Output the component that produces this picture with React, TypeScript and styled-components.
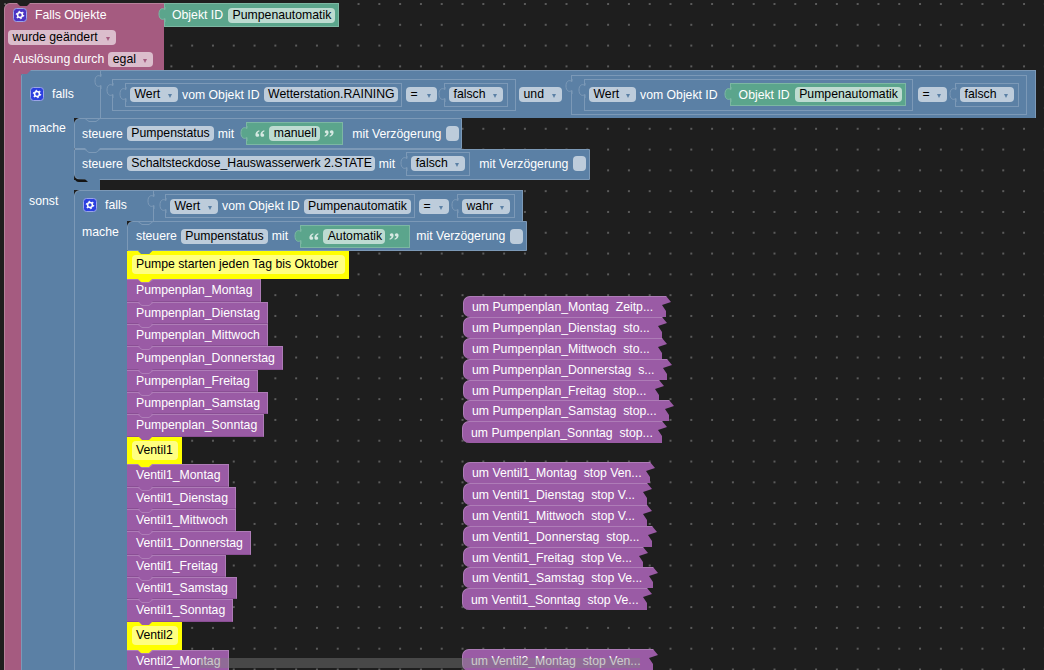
import React from "react";
import styled, { createGlobalStyle } from "styled-components";

const BLUE = "#5b80a5";
const BLUE_L = "#7c99b7";
const PINK = "#a55b80";
const PINK_L = "#b7829b";
const GREEN = "#5ba58c";
const GREEN_L = "#7cb7a3";
const PURPLE = "#9a5ba5";
const PURPLE_L = "#ae7cb7";
const CHEVRON = "polygon(0 0, 4px 3px, calc(100% - 4px) 3px, 100% 0, 100% 1px, calc(100% - 4px) 4px, 4px 4px, 0 1px)";
const TRAPEZOID = "polygon(0 0, 100% 0, calc(100% - 4px) 100%, 4px 100%)";

const Global = createGlobalStyle`
  html, body { margin: 0; padding: 0; background: #1e1e1e; overflow: hidden; }
  * { box-sizing: border-box; }
`;

const Workspace = styled.div`
  position: relative;
  width: 1044px;
  height: 670px;
  overflow: hidden;
  font: 12.25px "Liberation Sans", Arial, sans-serif;
  color: #fff;
  background-color: #1e1e1e;
  background-image: radial-gradient(circle at 1px 1px, #5c5c5c 0.7px, transparent 1px);
  background-size: 20.8px 20.8px;
  background-position: 4px 3px;
`;

const EventStack = styled.div`
  position: absolute;
  left: 4px;
  top: 3px;
  width: 1040px;
`;

const EventTop = styled.div`
  display: flex;
  align-items: flex-start;
`;

const EventCap = styled.div`
  position: relative;
  width: 160px;
  height: 67px;
  background: ${PINK};
  border-radius: 6px 0 0 0;
  border-top: 1px solid ${PINK_L};
  border-left: 1px solid ${PINK_L};
  display: flex;
  flex-direction: column;
  &::before {
    content: "";
    position: absolute;
    left: 12px;
    top: -1px;
    width: 13px;
    height: 3px;
    background: #1e1e1e;
    clip-path: polygon(0 0, 100% 0, calc(100% - 3px) 100%, 3px 100%);
  }
  &::after {
    content: "";
    position: absolute;
    z-index: 3;
    left: 12px;
    bottom: -4px;
    width: 14px;
    height: 4px;
    background: ${PINK};
    clip-path: ${TRAPEZOID};
  }
`;

const CapRow = styled.div<{ $h: number; $pl: number; $pt?: number }>`
  height: ${(p) => p.$h}px;
  padding-left: ${(p) => p.$pl}px;
  padding-top: ${(p) => p.$pt ?? 0}px;
  display: flex;
  align-items: center;
  gap: 5px;
  white-space: nowrap;
`;

const Body = styled.div`
  display: flex;
  align-items: stretch;
`;

const Arm = styled.div<{ $w: number; $bg: string; $line: string; $pt?: number }>`
  width: ${(p) => p.$w}px;
  flex: none;
  background: ${(p) => p.$bg};
  border-left: 1px solid ${(p) => p.$line};
  padding: ${(p) => p.$pt ?? 3}px 0 0 7px;
  line-height: 15px;
`;

const Column = styled.div`
  display: flex;
  flex-direction: column;
  align-items: flex-start;
`;

const IfHead = styled.div<{ $h: number; $w: number }>`
  position: relative;
  display: flex;
  height: ${(p) => p.$h}px;
  width: ${(p) => p.$w}px;
  background: ${BLUE};
  border-top: 1px solid ${BLUE_L};
  border-left: 1px solid ${BLUE_L};
  border-right: 1px solid ${BLUE_L};
  border-radius: 6px 0 0 0;
`;

const IfLabel = styled.div<{ $w: number; $pt: number }>`
  width: ${(p) => p.$w}px;
  flex: none;
  padding: ${(p) => p.$pt}px 0 0 8px;
  display: flex;
  align-items: flex-start;
  gap: 8px;
  line-height: 15px;
`;

const ValueArea = styled.div`
  flex: 1;
  position: relative;
  border-left: 1px solid ${BLUE_L};
  display: flex;
  align-items: center;
  padding-left: 11px;
`;

const Socket = styled.div<{ $h: number; $w: number; $ml?: number; $pl?: number; $gap?: number }>`
  position: relative;
  flex: none;
  height: ${(p) => p.$h}px;
  width: ${(p) => p.$w}px;
  margin-left: ${(p) => p.$ml ?? 0}px;
  padding-left: ${(p) => p.$pl ?? 12}px;
  border: 1px solid ${BLUE_L};
  background: ${BLUE};
  display: flex;
  align-items: center;
  gap: ${(p) => p.$gap ?? 4}px;
  white-space: nowrap;
`;

const Spacer = styled.div`
  position: relative;
  width: 79px;
  height: 10px;
  background: ${BLUE};
  border-left: 1px solid ${BLUE_L};
  &::after {
    content: "";
    position: absolute;
    left: 53px;
    top: -2px;
    width: 20px;
    height: 4px;
    background: #141414;
    border-radius: 0 0 0 7px;
    clip-path: polygon(0 0, 12% 30%, 100% 40%, 100% 100%, 0 100%);
  }
`;

const Statement = styled.div<{ $w: number; $h: number; $first?: boolean; $last?: boolean; $pl?: number }>`
  position: relative;
  width: ${(p) => p.$w}px;
  height: ${(p) => p.$h}px;
  background: ${BLUE};
  border: 1px solid ${BLUE_L};
  border-radius: ${(p) => (p.$first ? "6px" : "0")} 0 0 ${(p) => (p.$last ? "6px" : "0")};
  padding: 0 0 ${(p) => (p.$last ? 2 : 0)}px ${(p) => p.$pl ?? 7}px;
  display: flex;
  align-items: center;
  gap: 4px;
  white-space: nowrap;
  &::before {
    content: "";
    position: absolute;
    z-index: 3;
    left: 10px;
    top: -1px;
    width: 15px;
    height: 4px;
    background: ${BLUE_L};
    clip-path: ${CHEVRON};
  }
  &::after {
    content: "";
    position: absolute;
    z-index: 2;
    left: 10px;
    bottom: -4px;
    width: 15px;
    height: 4px;
    background: ${BLUE};
    clip-path: ${TRAPEZOID};
  }
`;

const GreenBlock = styled.div<{ $w: number; $h?: number; $ml?: number; $gap?: number; $pl?: number }>`
  position: relative;
  flex: none;
  width: ${(p) => p.$w}px;
  height: ${(p) => p.$h ?? 23}px;
  margin-left: ${(p) => p.$ml ?? 0}px;
  background: ${GREEN};
  border: 1px solid ${GREEN_L};
  display: flex;
  align-items: center;
  gap: ${(p) => p.$gap ?? 5}px;
  padding-left: ${(p) => p.$pl ?? 8}px;
  white-space: nowrap;
`;

const Pill = styled.div<{ $w: number; $tone: string; $ml?: number }>`
  position: relative;
  flex: none;
  width: ${(p) => p.$w}px;
  height: 15px;
  margin-left: ${(p) => p.$ml ?? 0}px;
  background: ${(p) => p.$tone};
  color: #000;
  border-radius: 4px;
  padding-left: 4.5px;
  line-height: 15px;
  white-space: nowrap;
`;

const Arrow = styled.span<{ $color: string }>`
  position: absolute;
  right: 6px;
  top: 7px;
  width: 0;
  height: 0;
  border-left: 2.5px solid transparent;
  border-right: 2.5px solid transparent;
  border-top: 4px solid ${(p) => p.$color};
`;

const Check = styled.div`
  flex: none;
  width: 13px;
  height: 15px;
  margin-left: 1px;
  border-radius: 4px;
  background: #bdccdb;
`;

const Tab = styled.svg`
  position: absolute;
  left: -7px;
  top: 3px;
  width: 7px;
  height: 15px;
  overflow: visible;
`;

const Label = styled.span<{ $ml?: number }>`
  flex: none;
  margin-left: ${(p) => p.$ml ?? 0}px;
`;

const Yellow = styled.div<{ $w: number; $h: number }>`
  position: relative;
  width: ${(p) => p.$w}px;
  height: ${(p) => p.$h}px;
  background: #ffff00;
  padding: 4px 4px 0 5px;
  &::before {
    content: "";
    position: absolute;
    z-index: 4;
    left: 11px;
    top: 0;
    width: 14px;
    height: 3px;
    background: ${BLUE};
    clip-path: polygon(0 0, 100% 0, calc(100% - 3px) 100%, 3px 100%);
    display: ${(p) => (p.$w > 100 ? "block" : "none")};
  }
  &::after {
    content: "";
    position: absolute;
    z-index: 4;
    left: 11px;
    bottom: -3px;
    width: 14px;
    height: 3px;
    background: #ffff00;
    clip-path: polygon(0 0, 100% 0, calc(100% - 3px) 100%, 3px 100%);
  }
`;

const YellowField = styled.div`
  height: 19px;
  background: #ffff80;
  color: #000;
  border-radius: 4px;
  padding-left: 4px;
  line-height: 19px;
  white-space: nowrap;
`;

const Call = styled.div<{ $w: number; $h: number }>`
  position: relative;
  width: ${(p) => p.$w}px;
  height: ${(p) => p.$h}px;
  background: ${PURPLE};
  border-top: 1px solid ${PURPLE_L};
  border-right: 1px solid ${PURPLE_L};
  border-bottom: 1px solid #8a4f94;
  padding: 0 0 1px 9px;
  display: flex;
  align-items: center;
  white-space: nowrap;
  &::before {
    content: "";
    position: absolute;
    z-index: 3;
    left: 11px;
    top: -1px;
    width: 15px;
    height: 4px;
    background: ${PURPLE_L};
    clip-path: ${CHEVRON};
  }
  &::after {
    content: "";
    position: absolute;
    z-index: 2;
    left: 11px;
    bottom: -4px;
    width: 15px;
    height: 4px;
    background: ${PURPLE};
    clip-path: ${TRAPEZOID};
  }
`;

const DefStack = styled.div<{ $top: number }>`
  position: absolute;
  left: 463px;
  top: ${(p) => p.$top}px;
  display: flex;
  flex-direction: column;
  align-items: flex-start;
`;

const Def = styled.div<{ $w: number; $h: number; $ml?: number }>`
  width: ${(p) => p.$w}px;
  height: ${(p) => p.$h}px;
  margin-left: ${(p) => p.$ml ?? 0}px;
  background: ${PURPLE};
  border-top: 1px solid ${PURPLE_L};
  border-left: 1px solid ${PURPLE_L};
  border-radius: 7px 0 0 7px;
  padding-left: 8px;
  display: flex;
  align-items: center;
  white-space: pre;
  clip-path: polygon(
    0 0,
    calc(100% - 5px) 0,
    100% 6px,
    calc(100% - 9px) 9px,
    calc(100% - 5px) 15px,
    calc(100% - 5px) 100%,
    0 100%
  );
`;

const Scrollbar = styled.div`
  position: absolute;
  left: 200px;
  top: 658px;
  width: 440px;
  height: 10px;
  background: rgba(132, 132, 132, 0.42);
`;

const blueTone = "#bdccdb";
const pinkTone = "#dbbdcc";
const greenTone = "#bddbd1";

function Gear({ bg }: { bg: string }) {
  return (
    <svg width="14" height="14" viewBox="0 0 14 14" style={{ flex: "none" }}>
      <rect x="0.5" y="0.5" width="13" height="13" rx="3" fill={bg} stroke="#9aa4e8" />
      <circle cx="7" cy="7" r="2.4" fill="none" stroke="#fff" strokeWidth="1.5" />
      <circle cx="7" cy="7" r="3.7" fill="none" stroke="#fff" strokeWidth="1.1" strokeDasharray="1.6 2.27" />
    </svg>
  );
}

function Puzzle({ fill, line }: { fill: string; line: string }) {
  return (
    <Tab viewBox="0 0 7 15">
      <path d="M7 0 V2.5 C4 0.5 1 2 1 7 C1 12 4 13.5 7 11.5 V15" fill={fill} stroke={line} />
    </Tab>
  );
}

function Quote({ close }: { close?: boolean }) {
  return (
    <svg width="10" height="9" viewBox="0 0 12 10" style={{ flex: "none", transform: close ? "rotate(180deg)" : undefined }}>
      <path d="M5 1 C2 2 0.5 4 0.5 6.5 C0.5 8.2 1.5 9 2.8 9 C4 9 5 8.1 5 7 C5 5.8 4 5 2.8 5 C3 4 4 3 5.5 2.2 Z" fill="#d6e9e2" />
      <path d="M11 1 C8 2 6.5 4 6.5 6.5 C6.5 8.2 7.5 9 8.8 9 C10 9 11 8.1 11 7 C11 5.8 10 5 8.8 5 C9 4 10 3 11.5 2.2 Z" fill="#d6e9e2" />
    </svg>
  );
}

function Drop({ w, text, tone = blueTone, color = BLUE, ml }: { w: number; text: string; tone?: string; color?: string; ml?: number }) {
  return (
    <Pill $w={w} $tone={tone} $ml={ml}>
      {text}
      <Arrow $color={color} />
    </Pill>
  );
}

function ObjectBlock({ w, ml, h, pl }: { w: number; ml?: number; h?: number; pl?: number }) {
  return (
    <GreenBlock $w={w} $ml={ml} $h={h} $pl={pl}>
      <Puzzle fill={GREEN} line={GREEN_L} />
      Objekt ID
      <Pill $w={107} $tone={greenTone}>Pumpenautomatik</Pill>
    </GreenBlock>
  );
}

function TextBlock({ w, fieldW, text, ml }: { w: number; fieldW: number; text: string; ml: number }) {
  return (
    <GreenBlock $w={w} $ml={ml} $gap={4}>
      <Puzzle fill={GREEN} line={GREEN_L} />
      <Quote />
      <Pill $w={fieldW} $tone={greenTone}>{text}</Pill>
      <Quote close />
    </GreenBlock>
  );
}

function ValueDrop({ w, text, ml }: { w: number; text: string; ml: number }) {
  return (
    <Socket $h={24} $w={w} $ml={ml} $pl={4}>
      <Puzzle fill={BLUE} line={BLUE_L} />
      <Drop w={w - 10} text={text} />
    </Socket>
  );
}

const calls1: [string, number, number][] = [
  ["Pumpenplan_Montag", 134, 23],
  ["Pumpenplan_Dienstag", 141, 22],
  ["Pumpenplan_Mittwoch", 141, 22],
  ["Pumpenplan_Donnerstag", 156, 24],
  ["Pumpenplan_Freitag", 131, 22],
  ["Pumpenplan_Samstag", 141, 22],
  ["Pumpenplan_Sonntag", 137, 23],
];
const calls2: [string, number, number][] = [
  ["Ventil1_Montag", 102, 23],
  ["Ventil1_Dienstag", 109, 22],
  ["Ventil1_Mittwoch", 109, 22],
  ["Ventil1_Donnerstag", 124, 24],
  ["Ventil1_Freitag", 99, 22],
  ["Ventil1_Samstag", 110, 22],
  ["Ventil1_Sonntag", 106, 23],
];
const defs1: [string, number, number, number][] = [
  ["um Pumpenplan_Montag  Zeitp...", 208, 21, 0],
  ["um Pumpenplan_Dienstag  sto...", 204, 21, 0],
  ["um Pumpenplan_Mittwoch  sto...", 204, 21, 0],
  ["um Pumpenplan_Donnerstag  s...", 209, 21, 0],
  ["um Pumpenplan_Freitag  stop...", 201, 20, 0],
  ["um Pumpenplan_Samstag  stop...", 211, 21, 0],
  ["um Pumpenplan_Sonntag  stop...", 205, 22, -1],
];
const defs2: [string, number, number, number][] = [
  ["um Ventil1_Montag  stop Ven...", 192, 21, 0],
  ["um Ventil1_Dienstag  stop V...", 189, 22, 0],
  ["um Ventil1_Mittwoch  stop V...", 189, 21, 0],
  ["um Ventil1_Donnerstag  stop...", 194, 21, 0],
  ["um Ventil1_Freitag  stop Ve...", 185, 20, 0],
  ["um Ventil1_Samstag  stop Ve...", 195, 21, 0],
  ["um Ventil1_Sonntag  stop Ve...", 190, 22, -1],
];

function Verz({ ml }: { ml: number }) {
  return <Label $ml={ml}>mit Verzögerung</Label>;
}

export default function App() {
  return (
    <Workspace>
      <Global />
      <EventStack>
        <EventTop>
          <EventCap>
            <CapRow $h={23} $pl={8}>
              <Gear bg="#4a33c4" />
              <Label $ml={3}>Falls Objekte</Label>
            </CapRow>
            <CapRow $h={21} $pl={3}>
              <Drop w={108} text="wurde geändert" tone={pinkTone} color={PINK} />
            </CapRow>
            <CapRow $h={23} $pl={8} $pt={1}>
              Auslösung durch
              <Drop w={45} text="egal" tone={pinkTone} color={PINK} ml={-1} />
            </CapRow>
          </EventCap>
          <ObjectBlock w={175} h={24} pl={7} />
        </EventTop>
        <Body>
          <Arm $w={17} $bg={PINK} $line={PINK_L} />
          <Column>
            <IfHead $h={48} $w={1015}>
              <IfLabel $w={78} $pt={16}>
                <Gear bg="#2b3fe0" />
                falls
              </IfLabel>
              <ValueArea>
                <Puzzle fill={BLUE} line={BLUE_L} />
                <Socket $h={32} $w={404} $pl={12}>
                  <Puzzle fill={BLUE} line={BLUE_L} />
                  <Socket $h={24} $w={277} $pl={4}>
                    <Puzzle fill={BLUE} line={BLUE_L} />
                    <Drop w={48} text="Wert" />
                    vom Objekt ID
                    <Pill $w={134} $tone={blueTone}>Wetterstation.RAINING</Pill>
                  </Socket>
                  <Drop w={31} text="=" />
                  <ValueDrop w={64} text="falsch" ml={3} />
                </Socket>
                <Drop w={43} text="und" ml={3} />
                <Socket $h={40} $w={456} $ml={9} $pl={12}>
                  <Puzzle fill={BLUE} line={BLUE_L} />
                  <Socket $h={32} $w={329} $pl={4}>
                    <Puzzle fill={BLUE} line={BLUE_L} />
                    <Drop w={47} text="Wert" />
                    vom Objekt ID
                    <ObjectBlock w={176} ml={8} />
                  </Socket>
                  <Drop w={29} text="=" ml={1} />
                  <ValueDrop w={64} text="falsch" ml={4} />
                </Socket>
              </ValueArea>
            </IfHead>
            <Body>
              <Arm $w={53} $bg={BLUE} $line={BLUE_L}>mache</Arm>
              <Column>
                <Statement $w={388} $h={31} $first>
                  steuere
                  <Pill $w={87} $tone={blueTone}>Pumpenstatus</Pill>
                  mit
                  <TextBlock w={97} fieldW={51} text="manuell" ml={8} />
                  <Verz ml={5} />
                  <Check />
                </Statement>
                <Statement $w={516} $h={31} $last>
                  steuere
                  <Pill $w={248} $tone={blueTone}>Schaltsteckdose_Hauswasserwerk 2.STATE</Pill>
                  mit
                  <ValueDrop w={64} text="falsch" ml={7} />
                  <Verz ml={5} />
                  <Check />
                </Statement>
              </Column>
            </Body>
            <Spacer />
            <Body>
              <Arm $w={53} $bg={BLUE} $line={BLUE_L} $pt={4}>sonst</Arm>
              <Column>
                <IfHead $h={31} $w={449}>
                  <IfLabel $w={78} $pt={7}>
                    <Gear bg="#2b3fe0" />
                    falls
                  </IfLabel>
                  <ValueArea>
                    <Puzzle fill={BLUE} line={BLUE_L} />
                    <Socket $h={24} $w={250} $pl={4}>
                      <Puzzle fill={BLUE} line={BLUE_L} />
                      <Drop w={48} text="Wert" />
                      vom Objekt ID
                      <Pill $w={107} $tone={blueTone}>Pumpenautomatik</Pill>
                    </Socket>
                    <Drop w={30} text="=" ml={4} />
                    <ValueDrop w={58} text="wahr" ml={8} />
                  </ValueArea>
                </IfHead>
                <Body>
                  <Arm $w={53} $bg={BLUE} $line={BLUE_L} $pt={4}>mache</Arm>
                  <Column>
                    <Statement $w={400} $h={30} $first $pl={8}>
                      steuere
                      <Pill $w={87} $tone={blueTone}>Pumpenstatus</Pill>
                      mit
                      <TextBlock w={110} fieldW={62} text="Automatik" ml={8} />
                      <Verz ml={2} />
                      <Check />
                    </Statement>
                    <Yellow $w={222} $h={28}>
                      <YellowField>Pumpe starten jeden Tag bis Oktober</YellowField>
                    </Yellow>
                    {calls1.map(([t, w, h]) => <Call key={t} $w={w} $h={h}>{t}</Call>)}
                    <Yellow $w={55} $h={27}>
                      <YellowField>Ventil1</YellowField>
                    </Yellow>
                    {calls2.map(([t, w, h]) => <Call key={t} $w={w} $h={h}>{t}</Call>)}
                    <Yellow $w={55} $h={28}>
                      <YellowField>Ventil2</YellowField>
                    </Yellow>
                    <Call $w={102} $h={23}>Ventil2_Montag</Call>
                  </Column>
                </Body>
              </Column>
            </Body>
          </Column>
        </Body>
      </EventStack>
      <DefStack $top={296}>
        {defs1.map(([t, w, h, ml]) => <Def key={t} $w={w} $h={h} $ml={ml}>{t}</Def>)}
      </DefStack>
      <DefStack $top={462}>
        {defs2.map(([t, w, h, ml]) => <Def key={t} $w={w} $h={h} $ml={ml}>{t}</Def>)}
      </DefStack>
      <DefStack $top={649}>
        <Def $w={196} $h={22} $ml={-1}>um Ventil2_Montag  stop Ven...</Def>
      </DefStack>
      <Scrollbar />
    </Workspace>
  );
}
